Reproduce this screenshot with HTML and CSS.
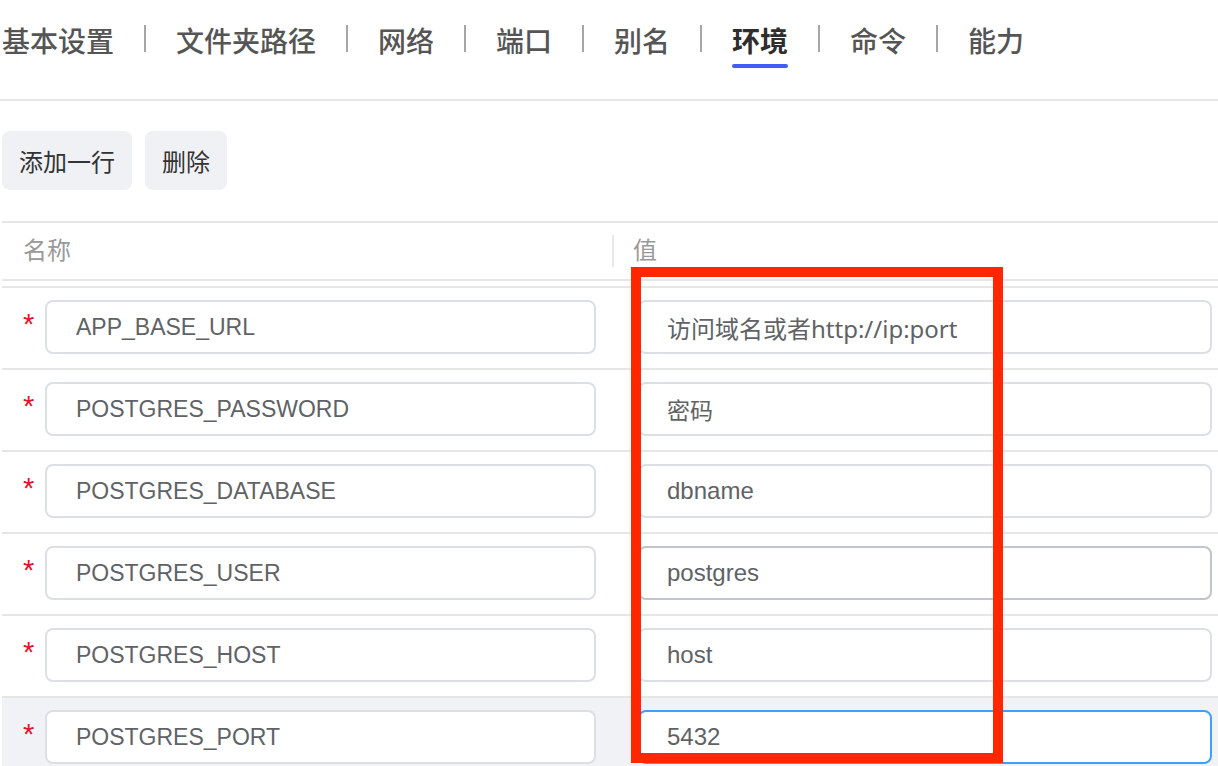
FILE: index.html
```html
<!DOCTYPE html>
<html lang="zh">
<head>
<meta charset="utf-8">
<title>环境</title>
<link rel="stylesheet" href="styles.css">
</head>
<body>
<div class="page">
  <nav class="tabs">
    <span class="tab">基本设置</span><span class="sep"></span>
    <span class="tab">文件夹路径</span><span class="sep"></span>
    <span class="tab">网络</span><span class="sep"></span>
    <span class="tab">端口</span><span class="sep"></span>
    <span class="tab">别名</span><span class="sep"></span>
    <span class="tab active">环境</span><span class="sep"></span>
    <span class="tab">命令</span><span class="sep"></span>
    <span class="tab">能力</span>
  </nav>

  <div class="toolbar">
    <button class="btn btn-add">添加一行</button>
    <button class="btn btn-del">删除</button>
  </div>

  <div class="table">
    <div class="thead">
      <div class="th th-name">名称</div>
      <div class="th th-value"><span class="col-divider"></span>值</div>
    </div>
    <div class="tbody">
      <div class="row">
        <div class="cell cell-name"><span class="req">*</span><input class="field" value="APP_BASE_URL"></div>
        <div class="cell cell-value"><input class="field field-value field-mixed" value="访问域名或者http://ip:port"></div>
      </div>
      <div class="row">
        <div class="cell cell-name"><span class="req">*</span><input class="field" value="POSTGRES_PASSWORD"></div>
        <div class="cell cell-value"><input class="field field-value field-cjk" value="密码"></div>
      </div>
      <div class="row">
        <div class="cell cell-name"><span class="req">*</span><input class="field" value="POSTGRES_DATABASE"></div>
        <div class="cell cell-value"><input class="field field-value" value="dbname"></div>
      </div>
      <div class="row">
        <div class="cell cell-name"><span class="req">*</span><input class="field" value="POSTGRES_USER"></div>
        <div class="cell cell-value"><input class="field field-value is-hover" value="postgres"></div>
      </div>
      <div class="row">
        <div class="cell cell-name"><span class="req">*</span><input class="field" value="POSTGRES_HOST"></div>
        <div class="cell cell-value"><input class="field field-value" value="host"></div>
      </div>
      <div class="row row-hover">
        <div class="cell cell-name"><span class="req">*</span><input class="field" value="POSTGRES_PORT"></div>
        <div class="cell cell-value"><input class="field field-value is-focus" value="5432"></div>
      </div>
    </div>
  </div>

  <div class="highlight"></div>
</div>
</body>
</html>
```

FILE: styles.css
```css
html, body {
  margin: 0;
  padding: 0;
  background: #ffffff;
  overflow: hidden;
}

.page {
  width: 1218px;
  height: 766px;
  overflow: hidden;
  font-family: "Noto Sans CJK SC", "Liberation Sans", sans-serif;
}

/* Tabs */
.tabs {
  display: flex;
  align-items: flex-start;
  height: 79px;
  padding: 20px 0 0 2px;
  border-bottom: 2px solid #e6e6e6;
}

.tab {
  position: relative;
  font-size: 28px;
  line-height: 40px;
  font-weight: 500;
  color: #555555;
  white-space: nowrap;
}

.tab.active {
  color: #2e2e2e;
  font-weight: 700;
}

.tab.active::after {
  content: "";
  position: absolute;
  left: 0;
  right: 0;
  top: 44px;
  height: 4px;
  border-radius: 2px;
  background: #3e5ff2;
}

.sep {
  width: 2px;
  height: 27px;
  margin: 5px 30px 0;
  background: #a6a6a6;
}

/* Toolbar */
.toolbar {
  display: flex;
  gap: 13px;
  margin-top: 30px;
  padding-left: 2px;
}

.btn {
  height: 59px;
  padding: 0 17px;
  border: none;
  border-radius: 8px;
  background: #f0f1f4;
  color: #333333;
  font-family: "Noto Sans CJK SC", sans-serif;
  font-size: 24px;
  line-height: 59px;
}

/* Table */
.table {
  margin: 31px 0 0 2px;
}

.thead {
  display: grid;
  grid-template-columns: 610px 1fr;
  height: 56px;
  border-top: 2px solid #e6e6e6;
  border-bottom: 2px solid #e6e6e6;
}

.th {
  display: flex;
  align-items: center;
  padding-bottom: 5px;
  box-sizing: border-box;
  font-size: 24px;
  color: #999999;
}

.th-name {
  padding-left: 21px;
}

.col-divider {
  width: 2px;
  height: 32px;
  margin: 5px 19px 0 0;
  background: #e8e8e8;
}

.tbody {
  margin-top: 5px;
  border-top: 2px solid #e6e6e6;
}

.row {
  display: grid;
  grid-template-columns: 610px 1fr;
  border-bottom: 2px solid #e6e6e6;
}

.row-hover {
  background: #f0f2f6;
}

.cell {
  display: flex;
  align-items: center;
  padding: 12px 0 14px;
}

.cell-name {
  padding-left: 21px;
  padding-right: 16px;
}

.cell-value {
  padding-left: 26px;
  padding-right: 6px;
}

.req {
  width: 22px;
  flex: none;
  margin-bottom: 6px;
  font-family: "Liberation Sans", sans-serif;
  font-size: 29px;
  line-height: 29px;
  color: #e0162e;
}

.field {
  box-sizing: border-box;
  width: 100%;
  height: 54px;
  margin: 0;
  padding: 0 0 0 29px;
  border: 2px solid #dcdfe6;
  border-radius: 8px;
  background: #ffffff;
  color: #606266;
  font-family: "Liberation Sans", "Noto Sans CJK SC", sans-serif;
  font-size: 23px;
  outline: none;
}

.field-value {
  padding-left: 27px;
  font-size: 24px;
}

.field-mixed {
  font-family: "Noto Sans", "Noto Sans CJK SC", sans-serif;
  font-size: 24px;
}

.field-cjk {
  font-family: "Noto Sans CJK SC", sans-serif;
  font-size: 23px;
}

.field.is-hover {
  border-color: #c0c4cc;
}

.field.is-focus {
  border-color: #409eff;
}

/* Annotation box overlay */
.highlight {
  position: absolute;
  left: 631px;
  top: 267px;
  width: 372px;
  height: 496px;
  box-sizing: border-box;
  border: 10px solid #ff2600;
  pointer-events: none;
}
```
